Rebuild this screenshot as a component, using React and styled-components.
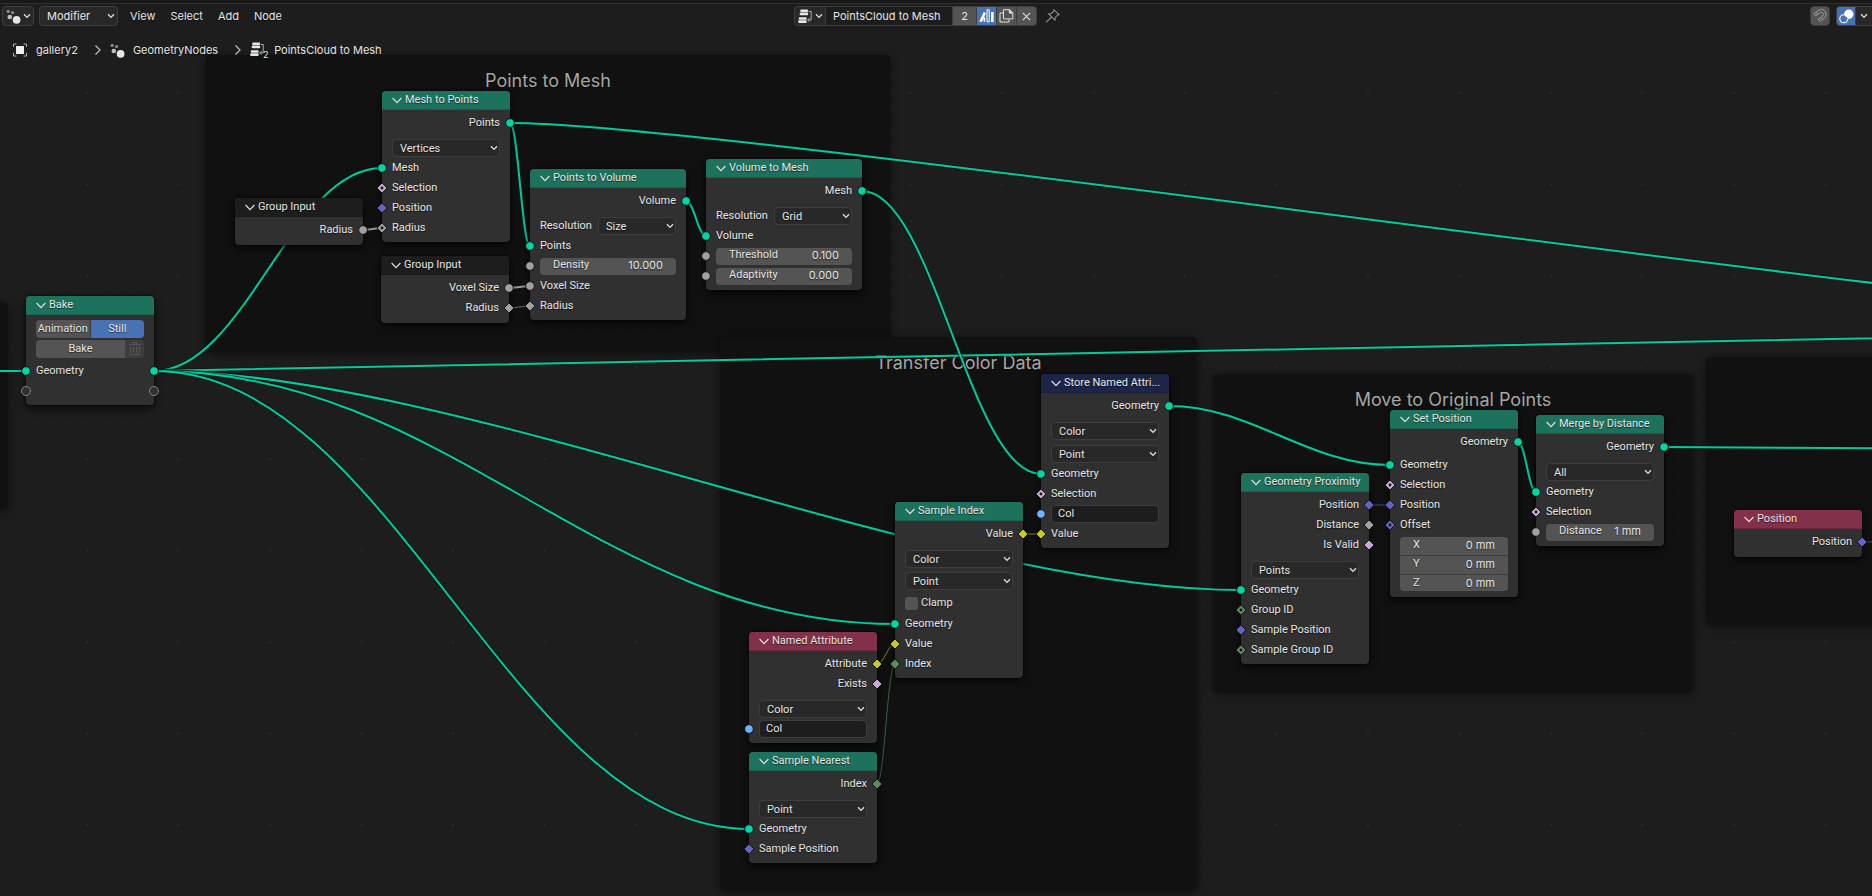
import React, { useState, useId } from 'react'
import styled, { createGlobalStyle } from 'styled-components'

const GlobalStyle = createGlobalStyle`
  * {
    box-sizing: border-box;
  }

  body {
    margin: 0;
    background: #1d1d1d;
    color: #e6e6e6;
    font-family: Inter, 'Liberation Sans', sans-serif;
    font-size: 11px;
  }

  button, input, select {
    font: inherit;
    color: inherit;
    margin: 0;
  }
`

const socketColors = {
  geometry: '#00d6a3',
  float: '#a1a1a1',
  bool: '#cca6d6',
  vector: '#6363c7',
  string: '#70b2ff',
  color: '#c7c729',
  int: '#598c5c'
}

const headerColors = {
  geometry: '#1d725e',
  input: '#83314a',
  attribute: '#1d2547',
  group: '#1d1d1d'
}

/* ---------- editor shell ---------- */

const Editor = styled.div`
  position: relative;
  min-height: 100vh;
  overflow: hidden;
`

const TopBar = styled.header`
  position: relative;
  z-index: 2;
  display: grid;
  grid-template-columns: 1fr auto 1fr;
  align-items: center;
  height: 26px;
  padding: 6px 0 0 2px;
  box-shadow: inset 0 3px 0 #181818, inset 0 4px 0 #303030;
`

const BarLeft = styled.div`
  display: flex;
  align-items: center;
  gap: 5px;
`

const BarCenter = styled.div`
  display: flex;
  align-items: center;
  gap: 8px;
  padding-right: 20px;
`

const BarRight = styled.div`
  display: flex;
  align-items: center;
  justify-content: flex-end;
  gap: 6px;
`

const Menus = styled.nav`
  display: flex;
  gap: 15px;
  margin-left: 7px;
`

const MenuButton = styled.button`
  padding: 0;
  border: none;
  background: none;
  line-height: 20px;
  text-shadow: 0 1px 1px rgba(0, 0, 0, 0.6);
`

const EditorTypeButton = styled.button`
  display: flex;
  align-items: center;
  justify-content: center;
  gap: 2px;
  width: 32px;
  height: 20px;
  padding: 0;
  border: 1px solid #3d3d3d;
  border-radius: 4px;
  background: #282828;
`

const JoinedGroup = styled.div`
  display: flex;
  height: 20px;
  border: 1px solid #3d3d3d;
  border-radius: 4px;
  background: #3d3d3d;
  overflow: hidden;
  gap: 1px;
`

const GroupButton = styled.button`
  display: flex;
  align-items: center;
  justify-content: center;
  gap: 2px;
  width: ${props => props.$width || 19}px;
  height: 18px;
  padding: 0;
  border: none;
  background: ${props => props.$active ? '#4772b3' : props.$dark ? '#282828' : '#545454'};
`

const NameInput = styled.input`
  width: 126px;
  height: 18px;
  padding: 0 7px;
  border: none;
  background: #1d1d1d;
`

const PlainButton = styled.button`
  display: flex;
  padding: 0;
  border: none;
  background: none;
`

const SnapButton = styled.button`
  display: flex;
  align-items: center;
  justify-content: center;
  width: 20px;
  height: 20px;
  padding: 0;
  border: 1px solid #3d3d3d;
  border-radius: 4px;
  background: #545454;
`

const OverlayGroup = styled(JoinedGroup)`
  border-right: none;
  border-radius: 4px 0 0 4px;
`

const Breadcrumbs = styled.nav`
  position: relative;
  z-index: 2;
  display: flex;
  align-items: center;
  height: 16px;
  margin: 16px 0 0 12px;
`

const Crumb = styled.a`
  display: flex;
  align-items: center;
  gap: ${props => props.$gap || 8}px;
  color: inherit;
  text-decoration: none;
  text-shadow: 0 1px 1px rgba(0, 0, 0, 0.6);
`

const CrumbArrow = styled.svg`
  width: 8px;
  height: 12px;
  margin: 0 8px 0 16px;
`

/* ---------- canvas ---------- */

const Canvas = styled.main`
  position: absolute;
  inset: 0;
  font-family: Roboto, Inter, sans-serif;
  text-shadow: 0 1px 1px rgba(0, 0, 0, 0.6);
`

const Layer = styled.svg`
  position: absolute;
  inset: 0;
  width: 100%;
  height: 100%;
  pointer-events: none;
`

const FrameBox = styled.section`
  position: absolute;
  left: ${props => props.$x}px;
  top: ${props => props.$y}px;
  width: ${props => props.$w}px;
  height: ${props => props.$h}px;
  padding-top: 14px;
  border-radius: 4px;
  background: rgba(17, 17, 17, 0.94);
  box-shadow: 0 2px 10px rgba(0, 0, 0, 0.5);
  text-align: center;
`

const FrameTitle = styled.h2`
  margin: 0;
  color: #a6a6a6;
  font-family: Inter, sans-serif;
  font-size: 18px;
  font-weight: 400;
  line-height: 24px;
`

const NodeBox = styled.article`
  position: absolute;
  left: ${props => props.$x}px;
  top: ${props => props.$y}px;
  width: ${props => props.$w}px;
  padding-bottom: ${props => props.$foot}px;
  border-radius: 4px;
  background: #303030;
  box-shadow: 0 0 0 1px rgba(0, 0, 0, 0.3), 0 3px 8px 1px rgba(0, 0, 0, 0.6);
`

const NodeHeader = styled.h3`
  display: flex;
  align-items: center;
  gap: 3px;
  height: 19px;
  margin: 0 0 3px;
  padding: 0 10px;
  border-bottom: 1px solid rgba(0, 0, 0, 0.15);
  border-radius: 4px 4px 0 0;
  background: ${props => headerColors[props.$kind]};
  font-size: 11px;
  font-weight: 400;
  line-height: 18px;
  white-space: nowrap;
`

const Row = styled.div`
  position: relative;
  display: flex;
  align-items: center;
  justify-content: ${props => props.$out ? 'flex-end' : 'flex-start'};
  height: 20px;
  margin-top: ${props => props.$gap || 0}px;
  padding: 0 10px;
  line-height: 18px;
`

const SocketMark = styled.svg`
  position: absolute;
  top: 4px;
  ${props => props.$side}: -6px;
  width: 12px;
  height: 12px;
  overflow: visible;
`

const SelectBox = styled.span`
  position: relative;
  display: flex;
  width: ${props => props.$width ? props.$width + 'px' : '100%'};

  label + & {
    margin-left: auto;
  }

  svg {
    position: absolute;
    right: ${props => props.$bar ? 3 : 2}px;
    top: 50%;
    margin-top: -3px;
    pointer-events: none;
  }
`

const SelectField = styled.select`
  appearance: none;
  width: 100%;
  height: ${props => props.$bar ? 20 : 18}px;
  padding: 0 16px ${props => props.$bar ? 0 : 2}px 7px;
  border: 1px solid #3d3d3d;
  border-radius: 4px;
  background: #282828;
  text-shadow: inherit;
`

const TextField = styled.input`
  width: 100%;
  height: 18px;
  padding: 0 6px 1px;
  border: 1px solid #3d3d3d;
  border-radius: 4px;
  background: #1d1d1d;
  text-shadow: inherit;
`

const NumberBox = styled.label`
  display: flex;
  align-items: center;
  justify-content: space-between;
  width: 100%;
  height: ${props => props.$stacked ? 18 : 17}px;
  padding: 0 13px 2px;
  border-radius: ${props => props.$stacked ? 0 : 4}px;
  background: #545454;
  line-height: 16px;

  input {
    flex: 0 1 52px;
    width: 52px;
    min-width: 0;
    padding: 0;
    border: none;
    background: none;
    font-family: Inter, sans-serif;
    text-align: right;
    text-shadow: inherit;
  }
`

const VectorBox = styled.div`
  display: flex;
  flex-direction: column;
  gap: 1px;
  height: 54px;
  margin: 2px 10px;
  border-radius: 4px;
  background: #3d3d3d;
  overflow: hidden;
`

const CheckLabel = styled.label`
  display: flex;
  align-items: center;
  gap: 3px;

  input {
    appearance: none;
    width: 13px;
    height: 13px;
    border-radius: 3px;
    background: #545454;
  }
`

const BakeButtons = styled.div`
  display: flex;
  flex-direction: column;
  gap: 2px;
  padding: 2px 10px 3px;
`

const ButtonPair = styled.div`
  display: flex;
  gap: 1px;
  height: 18px;
  border-radius: 4px;
  background: #3d3d3d;
  overflow: hidden;
`

const NodeButton = styled.button`
  display: flex;
  align-items: center;
  justify-content: center;
  flex: ${props => props.$narrow ? '0 0 18px' : '1 1 0'};
  padding: 0 0 1px;
  border: none;
  background: ${props => props.$active ? '#4772b3' : props.$narrow ? '#3d3d3d' : '#545454'};
  text-shadow: inherit;
`

/* ---------- icons ---------- */

const Chevron = ({ size = 8 }) => (
  <svg width={size} height={size * 0.75} viewBox="0 0 8 6" fill="none" stroke="#e0e0e0" strokeWidth="1.3">
    <path d="M1 1.2 4 4.4 7 1.2" />
  </svg>
)

const CollapseIcon = () => (
  <svg width="10" height="7" viewBox="0 0 10 7" fill="none" stroke="#e0e0e0" strokeWidth="1.2">
    <path d="M0.6 1 5 5.6 9.4 1" />
  </svg>
)

const GeometryNodesIcon = () => (
  <svg width="15" height="15" viewBox="0 0 15 15" fill="#e6e6e6">
    <circle cx="10.6" cy="10.8" r="3.9" />
    <circle cx="3.8" cy="8" r="2.3" fill="#c0c0c0" />
    <circle cx="2.2" cy="2.4" r="1.6" fill="#8c8c8c" />
    <circle cx="6.6" cy="3.6" r="1.6" fill="#8c8c8c" />
  </svg>
)

const NodeTreeIcon = () => (
  <svg width="15" height="15" viewBox="0 0 15 15" fill="#e6e6e6">
    <rect x="2.2" y="0.5" width="8" height="2.4" rx="1" />
    <rect x="1.7" y="3.4" width="8.5" height="2.8" rx="1" />
    <rect x="0.7" y="8.3" width="8" height="2.4" rx="1" />
    <rect x="0.2" y="11.2" width="8.5" height="2.8" rx="1" />
    <path d="M10.8 2.5h2.4v8.4h-3.4M11.6 9.2 9.6 10.9l2 1.7" fill="none" stroke="#b0b0b0" />
  </svg>
)

const ObjectIcon = () => (
  <svg width="16" height="14" viewBox="0 0 16 14">
    <path d="M4.5 1H1.5v3M11.5 1h3v3M4.5 13H1.5v-3M11.5 13h3v-3" fill="none" stroke="#b0b0b0" />
    <rect x="4" y="3" width="8" height="8" rx="0.5" fill="#f0f0f0" />
  </svg>
)

const LibraryIcon = () => (
  <svg width="15" height="14" viewBox="0 0 15 14" fill="#fff">
    <path d="M0.3 12.8 4.6 3l2.4 1-4 8.8zM12 3h2.6v10H12z" />
    <path d="M8 0.8h2.2v12H8z" fill="none" stroke="#fff" />
    <path d="M4.6 8.3h1.6v4.5H4.6z" />
  </svg>
)

const DuplicateIcon = () => (
  <svg width="15" height="14" viewBox="0 0 15 14" fill="none" stroke="#e0e0e0">
    <path d="M4.5 0.7h6l3.3 3.2v6H4.5z" />
    <path d="M10.3 0.7v3.4h3.4z" fill="#e0e0e0" />
    <path d="M4 4H1v9h9v-2.6" />
  </svg>
)

const CloseIcon = () => (
  <svg width="9" height="9" viewBox="0 0 9 9" stroke="#e0e0e0" strokeWidth="1.1">
    <path d="M0.8 0.8 8.2 8.2M8.2 0.8 0.8 8.2" />
  </svg>
)

const PinIcon = () => (
  <svg width="15" height="14" viewBox="0 0 15 14" fill="none" stroke="#8f8f8f" strokeWidth="1.1">
    <path d="M9 0.8 14 5.6 12.6 6 10.4 8.4 10 11.2 3.6 5 6.4 4.6 8.6 2.2zM6.6 8 1 13.4" />
  </svg>
)

const MagnetIcon = () => (
  <svg width="14" height="14" viewBox="0 0 14 14" fill="none" stroke="#a0a0a0" strokeWidth="1">
    <path d="M1 4.6 5 1.8C8.2-0.4 11 0.6 12.4 3c1.4 2.6 0.6 5-1.6 6.5L6.8 12.4 5.2 10.2 9 7.6C10.4 6.6 10.6 5.4 10 4.4 9.2 3.2 8 3.2 6.6 4.1L2.6 6.9z" />
    <path d="M3 3.3 4.6 5.5M8 8.3l1.6 2.2" />
  </svg>
)

const OverlayIcon = () => (
  <svg width="15" height="15" viewBox="0 0 15 15">
    <circle cx="9.8" cy="5.2" r="4.7" fill="#fff" />
    <circle cx="4.8" cy="9.8" r="4" fill="none" stroke="#fff" strokeWidth="1.1" />
    <path d="M5.4 6.8A4.6 4.6 0 0 0 8.6 9.5" fill="none" stroke="#4772b3" strokeWidth="1.2" />
  </svg>
)

const TrashIcon = () => (
  <svg width="12" height="13" viewBox="0 0 12 13" fill="none" stroke="#585858">
    <path d="M0.5 2.5h11M4 2.5V0.6h4v1.9M1.7 4.5v8h8.6v-8M4.5 5v5.5M7.5 5v5.5" />
  </svg>
)

/* ---------- node parts ---------- */

const Socket = ({ type, shape = 'circle', side }) => {
  const fill = socketColors[type]
  return (
    <SocketMark $side={side} viewBox="-6 -6 12 12" stroke="#161616">
      {shape === 'circle' && <circle r="4.3" fill={fill} />}
      {shape === 'empty' && <circle r="4.5" fill="#303030" stroke="#858585" />}
      {shape !== 'circle' && shape !== 'empty' && (
        <path d="M0-5 5 0 0 5-5 0z" fill={fill} />
      )}
      {shape === 'dot' && <circle r="1.4" fill="#161616" stroke="none" />}
    </SocketMark>
  )
}

const Out = ({ label, type, shape }) => (
  <Row $out>
    {label}
    <Socket type={type} shape={shape} side="right" />
  </Row>
)

const In = ({ label, type, shape, gap }) => (
  <Row $gap={gap}>
    <Socket type={type} shape={shape} side="left" />
    {label}
  </Row>
)

const Choice = ({ value, label, gap = 5 }) => {
  const id = useId()
  return (
    <Row $gap={gap}>
      {label && <label htmlFor={id}>{label}</label>}
      <SelectBox $width={label ? 78 : null}>
        <SelectField id={id} aria-label={label || value} defaultValue={value}>
          <option>{value}</option>
        </SelectField>
        <Chevron />
      </SelectBox>
    </Row>
  )
}

const NumberRow = ({ label, value }) => (
  <Row>
    <Socket type="float" side="left" />
    <NumberBox>
      {label}
      <input defaultValue={value} />
    </NumberBox>
  </Row>
)

const TextRow = ({ label, value }) => (
  <Row>
    <Socket type="string" side="left" />
    <TextField aria-label={label} defaultValue={value} />
  </Row>
)

const Node = ({ title, kind = 'geometry', x, y, w = 128, foot = 4, children }) => (
  <NodeBox $x={x} $y={y} $w={w} $foot={foot}>
    <NodeHeader $kind={kind}>
      <PlainButton aria-label={`Collapse ${title}`}>
        <CollapseIcon />
      </PlainButton>
      {title}
    </NodeHeader>
    {children}
  </NodeBox>
)

const frames = [
  { title: '', x: -120, y: 302, w: 128, h: 207 },
  { title: 'Points to Mesh', x: 206, y: 55, w: 684, h: 297 },
  { title: 'Transfer Color Data', x: 720, y: 337, w: 477, h: 553 },
  { title: 'Move to Original Points', x: 1213, y: 374, w: 480, h: 318 },
  { title: '', x: 1706, y: 357, w: 300, h: 268 }
]

// from / to are socket centres on the canvas
const links = [
  { from: [-100, 371], to: [26, 371] },
  { from: [154, 371], to: [382, 168] },
  { from: [154, 371], to: [2454, 327] },
  { from: [154, 371], to: [1241, 590] },
  { from: [154, 371], to: [895, 624] },
  { from: [154, 371], to: [750, 829] },
  { from: [510, 123], to: [2244, 318], handle: 220 },
  { from: [510, 123], to: [530, 246] },
  { from: [686, 201], to: [706, 236] },
  { from: [862, 191], to: [1041, 474] },
  { from: [1169, 406], to: [1390, 465] },
  { from: [1518, 442], to: [1536, 492] },
  { from: [1664, 447], to: [2000, 449] },
  { from: [363, 230], to: [382, 228], type: 'float' },
  { from: [509, 288], to: [530, 286], type: 'float' },
  { from: [509, 308], to: [530, 306], type: 'float', field: true },
  { from: [1023, 534], to: [1041, 534], type: 'color', field: true },
  { from: [877, 664], to: [895, 644], type: 'color', field: true },
  { from: [877, 784], to: [895, 664], type: 'int', field: true },
  { from: [1369, 505], to: [1390, 505], type: 'vector', field: true },
  { from: [1862, 542], to: [1960, 542], type: 'vector', field: true }
]

const linkPath = ([x0, y0], [x1, y1], fixedHandle) => {
  const dx = x1 - x0
  const slope = Math.abs((y1 - y0) / dx)
  const handle = fixedHandle || 0.4 * dx * Math.min(1, slope * 3.5)
  return `M${x0} ${y0}C${x0 + handle} ${y0} ${x1 - handle} ${y1} ${x1} ${y1}`
}

const Link = ({ from, to, type = 'geometry', field, handle }) => {
  const d = linkPath(from, to, handle)
  return (
    <g fill="none">
      <path d={d} stroke="#0b1512" strokeOpacity="0.6" strokeWidth={field ? 2 : 4} />
      <path
        d={d}
        stroke={socketColors[type]}
        strokeOpacity={field ? 0.65 : 0.95}
        strokeWidth={field ? 1 : 2}
      />
    </g>
  )
}

const STEP = 18.3
const gridDots = []
for (let i = 0; i < 10; i++) {
  for (let j = 0; j < 10; j++) {
    gridDots.push({ x: 1 + i * STEP, y: 1 + j * STEP, major: i % 5 === 0 && j % 5 === 0 })
  }
}

const Grid = () => (
  <Layer>
    <defs>
      <pattern id="dots" x="86" y="92" width="183" height="183" patternUnits="userSpaceOnUse">
        {gridDots.map(dot => (
          <circle
            key={`${dot.x}-${dot.y}`}
            cx={dot.x}
            cy={dot.y}
            r={dot.major ? 1.1 : 0.7}
            fill={dot.major ? '#292929' : '#232323'}
          />
        ))}
      </pattern>
    </defs>
    <rect width="100%" height="100%" fill="url(#dots)" />
  </Layer>
)

const BakeNode = () => {
  const [mode, setMode] = useState('Still')
  return (
    <Node title="Bake" x={26} y={296}>
      <BakeButtons>
        <ButtonPair>
          {['Animation', 'Still'].map(name => (
            <NodeButton
              key={name}
              $active={mode === name}
              aria-pressed={mode === name}
              onClick={() => setMode(name)}
            >
              {name}
            </NodeButton>
          ))}
        </ButtonPair>
        <ButtonPair>
          <NodeButton>Bake</NodeButton>
          <NodeButton $narrow aria-label="Delete bake">
            <TrashIcon />
          </NodeButton>
        </ButtonPair>
      </BakeButtons>
      <Row>
        <Socket type="geometry" side="left" />
        Geometry
        <Socket type="geometry" side="right" />
      </Row>
      <Row>
        <Socket shape="empty" side="left" />
        <Socket shape="empty" side="right" />
      </Row>
    </Node>
  )
}

const NodeCanvas = () => (
  <Canvas>
    <Grid />
    {frames.map(frame => (
      <FrameBox key={frame.x} $x={frame.x} $y={frame.y} $w={frame.w} $h={frame.h}>
        {frame.title && <FrameTitle>{frame.title}</FrameTitle>}
      </FrameBox>
    ))}
    <Layer>
      {links.map(link => (
        <Link key={link.from.concat(link.to).join()} {...link} />
      ))}
    </Layer>

    <BakeNode />

    <Node title="Group Input" kind="group" x={235} y={198} foot={5}>
      <Out label="Radius" type="float" />
    </Node>

    <Node title="Mesh to Points" x={382} y={91}>
      <Out label="Points" type="geometry" />
      <Choice value="Vertices" />
      <In label="Mesh" type="geometry" />
      <In label="Selection" type="bool" shape="dot" />
      <In label="Position" type="vector" shape="diamond" />
      <In label="Radius" type="float" shape="dot" />
    </Node>

    <Node title="Group Input" kind="group" x={381} y={256} foot={5}>
      <Out label="Voxel Size" type="float" />
      <Out label="Radius" type="float" shape="diamond" />
    </Node>

    <Node title="Points to Volume" x={530} y={169} w={156}>
      <Out label="Volume" type="geometry" />
      <Choice label="Resolution" value="Size" />
      <In label="Points" type="geometry" />
      <NumberRow label="Density" value="10.000" />
      <In label="Voxel Size" type="float" />
      <In label="Radius" type="float" shape="diamond" />
    </Node>

    <Node title="Volume to Mesh" x={706} y={159} w={156}>
      <Out label="Mesh" type="geometry" />
      <Choice label="Resolution" value="Grid" />
      <In label="Volume" type="geometry" />
      <NumberRow label="Threshold" value="0.100" />
      <NumberRow label="Adaptivity" value="0.000" />
    </Node>

    <Node title="Store Named Attri..." kind="attribute" x={1041} y={374}>
      <Out label="Geometry" type="geometry" />
      <Choice value="Color" />
      <Choice value="Point" gap={3} />
      <In label="Geometry" type="geometry" />
      <In label="Selection" type="bool" shape="dot" />
      <TextRow label="Name" value="Col" />
      <In label="Value" type="color" shape="diamond" />
    </Node>

    <Node title="Sample Index" x={895} y={502}>
      <Out label="Value" type="color" shape="diamond" />
      <Choice value="Color" />
      <Choice value="Point" gap={2} />
      <Row $gap={2}>
        <CheckLabel>
          <input type="checkbox" />
          Clamp
        </CheckLabel>
      </Row>
      <In label="Geometry" type="geometry" gap={1} />
      <In label="Value" type="color" shape="diamond" />
      <In label="Index" type="int" shape="diamond" />
    </Node>

    <Node title="Named Attribute" kind="input" x={749} y={632}>
      <Out label="Attribute" type="color" shape="diamond" />
      <Out label="Exists" type="bool" shape="diamond" />
      <Choice value="Color" />
      <TextRow label="Name" value="Col" />
    </Node>

    <Node title="Sample Nearest" x={749} y={752}>
      <Out label="Index" type="int" shape="diamond" />
      <Choice value="Point" />
      <In label="Geometry" type="geometry" />
      <In label="Sample Position" type="vector" shape="diamond" />
    </Node>

    <Node title="Geometry Proximity" x={1241} y={473}>
      <Out label="Position" type="vector" shape="diamond" />
      <Out label="Distance" type="float" shape="diamond" />
      <Out label="Is Valid" type="bool" shape="diamond" />
      <Choice value="Points" />
      <In label="Geometry" type="geometry" />
      <In label="Group ID" type="int" shape="dot" />
      <In label="Sample Position" type="vector" shape="diamond" />
      <In label="Sample Group ID" type="int" shape="dot" />
    </Node>

    <Node title="Set Position" x={1390} y={410}>
      <Out label="Geometry" type="geometry" />
      <In label="Geometry" type="geometry" gap={3} />
      <In label="Selection" type="bool" shape="dot" />
      <In label="Position" type="vector" shape="diamond" />
      <In label="Offset" type="vector" shape="dot" />
      <VectorBox>
        {['X', 'Y', 'Z'].map(axis => (
          <NumberBox key={axis} $stacked>
            {axis}
            <input defaultValue="0 mm" />
          </NumberBox>
        ))}
      </VectorBox>
    </Node>

    <Node title="Merge by Distance" x={1536} y={415}>
      <Out label="Geometry" type="geometry" />
      <Choice value="All" />
      <In label="Geometry" type="geometry" />
      <In label="Selection" type="bool" shape="dot" />
      <NumberRow label="Distance" value="1 mm" />
    </Node>

    <Node title="Position" kind="input" x={1734} y={510} foot={5}>
      <Out label="Position" type="vector" shape="diamond" />
    </Node>
  </Canvas>
)

const Separator = () => (
  <CrumbArrow viewBox="0 0 8 12" fill="none" stroke="#c0c0c0" strokeWidth="1.2">
    <path d="M1.5 1.5 6 6 1.5 10.5" />
  </CrumbArrow>
)

const NodeTreeUsers = () => (
  <svg width="20" height="16" viewBox="0 0 20 16" overflow="visible">
    <NodeTreeIcon />
    <text x="13" y="16" fill="#e6e6e6" fontSize="9">2</text>
  </svg>
)

const App = () => (
  <>
    <GlobalStyle />
    <Editor>
      <NodeCanvas />
      <TopBar>
        <BarLeft>
          <EditorTypeButton aria-label="Editor type">
            <GeometryNodesIcon />
            <Chevron />
          </EditorTypeButton>
          <SelectBox $width={79} $bar>
            <SelectField $bar aria-label="Geometry nodes type" defaultValue="Modifier">
              <option>Modifier</option>
            </SelectField>
            <Chevron />
          </SelectBox>
          <Menus>
            {['View', 'Select', 'Add', 'Node'].map(name => (
              <MenuButton key={name}>{name}</MenuButton>
            ))}
          </Menus>
        </BarLeft>

        <BarCenter>
          <JoinedGroup>
            <GroupButton $width={30} $dark aria-label="Browse node trees">
              <NodeTreeIcon />
              <Chevron />
            </GroupButton>
            <NameInput aria-label="Node tree name" defaultValue="PointsCloud to Mesh" />
            <GroupButton $width={23}>2</GroupButton>
            <GroupButton $active aria-label="Mark as asset">
              <LibraryIcon />
            </GroupButton>
            <GroupButton aria-label="Duplicate">
              <DuplicateIcon />
            </GroupButton>
            <GroupButton aria-label="Unlink">
              <CloseIcon />
            </GroupButton>
          </JoinedGroup>
          <PlainButton aria-label="Pin">
            <PinIcon />
          </PlainButton>
        </BarCenter>

        <BarRight>
          <SnapButton aria-label="Snap">
            <MagnetIcon />
          </SnapButton>
          <OverlayGroup>
            <GroupButton $active $width={18} aria-label="Show overlays">
              <OverlayIcon />
            </GroupButton>
            <GroupButton $dark $width={16} aria-label="Overlay options">
              <Chevron />
            </GroupButton>
          </OverlayGroup>
        </BarRight>
      </TopBar>

      <Breadcrumbs aria-label="Node tree path">
        <Crumb href="#gallery2">
          <ObjectIcon />
          gallery2
        </Crumb>
        <Separator />
        <Crumb href="#geometry-nodes">
          <GeometryNodesIcon />
          GeometryNodes
        </Crumb>
        <Separator />
        <Crumb href="#pointscloud" $gap={4}>
          <NodeTreeUsers />
          PointsCloud to Mesh
        </Crumb>
      </Breadcrumbs>
    </Editor>
  </>
)

export default App
